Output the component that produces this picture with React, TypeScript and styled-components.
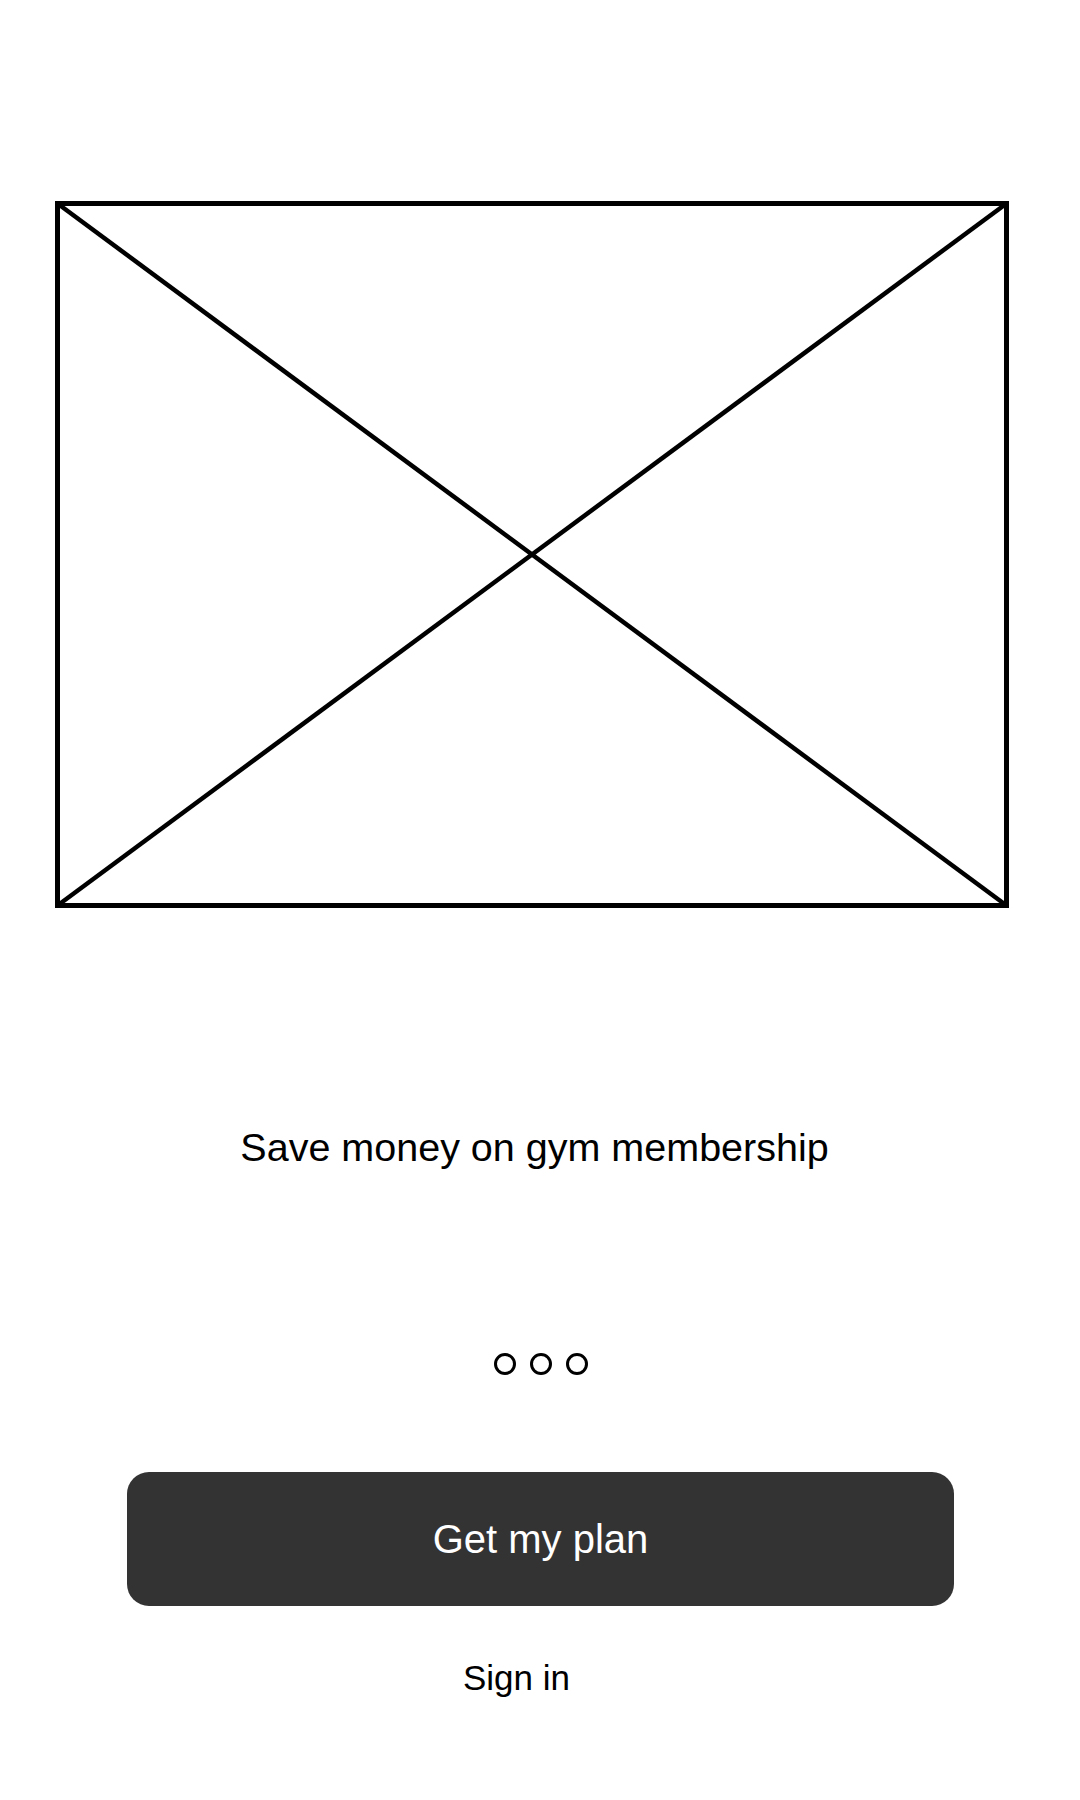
import React from 'react'
import styled, { createGlobalStyle } from 'styled-components'

const GlobalStyle = createGlobalStyle`
  body {
    margin: 0;
    background: #ffffff;
    font-family: 'Liberation Sans', Arial, sans-serif;
  }
`

const Screen = styled.div`
  width: 1080px;
  height: 1800px;
  display: flex;
  flex-direction: column;
  background: #ffffff;
  color: #000000;
`

const Hero = styled.div`
  margin: 201px 0 0 55px;
  width: 954px;
  height: 707px;
`

const Title = styled.div`
  margin-top: 216px;
  padding: 0 66px 0 55px;
  font-size: 39.5px;
  line-height: 46px;
  text-align: center;
`

const Dots = styled.div`
  margin-top: 183px;
  padding-left: 2px;
  display: flex;
  justify-content: center;
  gap: 14px;
`

const Dot = styled.span`
  width: 22px;
  height: 22px;
  box-sizing: border-box;
  border: 3px solid #000000;
  border-radius: 50%;
`

const PrimaryButton = styled.button`
  margin: 97px 0 0 127px;
  width: 827px;
  height: 134px;
  border: none;
  border-radius: 22px;
  background: #333333;
  color: #ffffff;
  font-family: inherit;
  font-size: 40px;
  line-height: 46px;
  display: flex;
  align-items: center;
  justify-content: center;
  padding: 0;
`

const LinkText = styled.div`
  margin-top: 52px;
  padding-right: 47px;
  font-size: 35px;
  line-height: 40px;
  text-align: center;
`

const Placeholder: React.FC = () => (
  <Hero>
    <svg width='954' height='707' viewBox='0 0 954 707'>
      <rect x='2.5' y='2.5' width='949' height='702' fill='none' stroke='#000' strokeWidth='5' />
      <line x1='2.5' y1='2.5' x2='951.5' y2='704.5' stroke='#000' strokeWidth='4.5' />
      <line x1='951.5' y1='2.5' x2='2.5' y2='704.5' stroke='#000' strokeWidth='4.5' />
    </svg>
  </Hero>
)

const App: React.FC = () => {
  return (
    <>
      <GlobalStyle />
      <Screen>
        <Placeholder />
        <Title>Save money on gym membership</Title>
        <Dots>
          {[0, 1, 2].map((i) => (
            <Dot key={i} />
          ))}
        </Dots>
        <PrimaryButton>Get my plan</PrimaryButton>
        <LinkText>Sign in</LinkText>
      </Screen>
    </>
  )
}

export default App
